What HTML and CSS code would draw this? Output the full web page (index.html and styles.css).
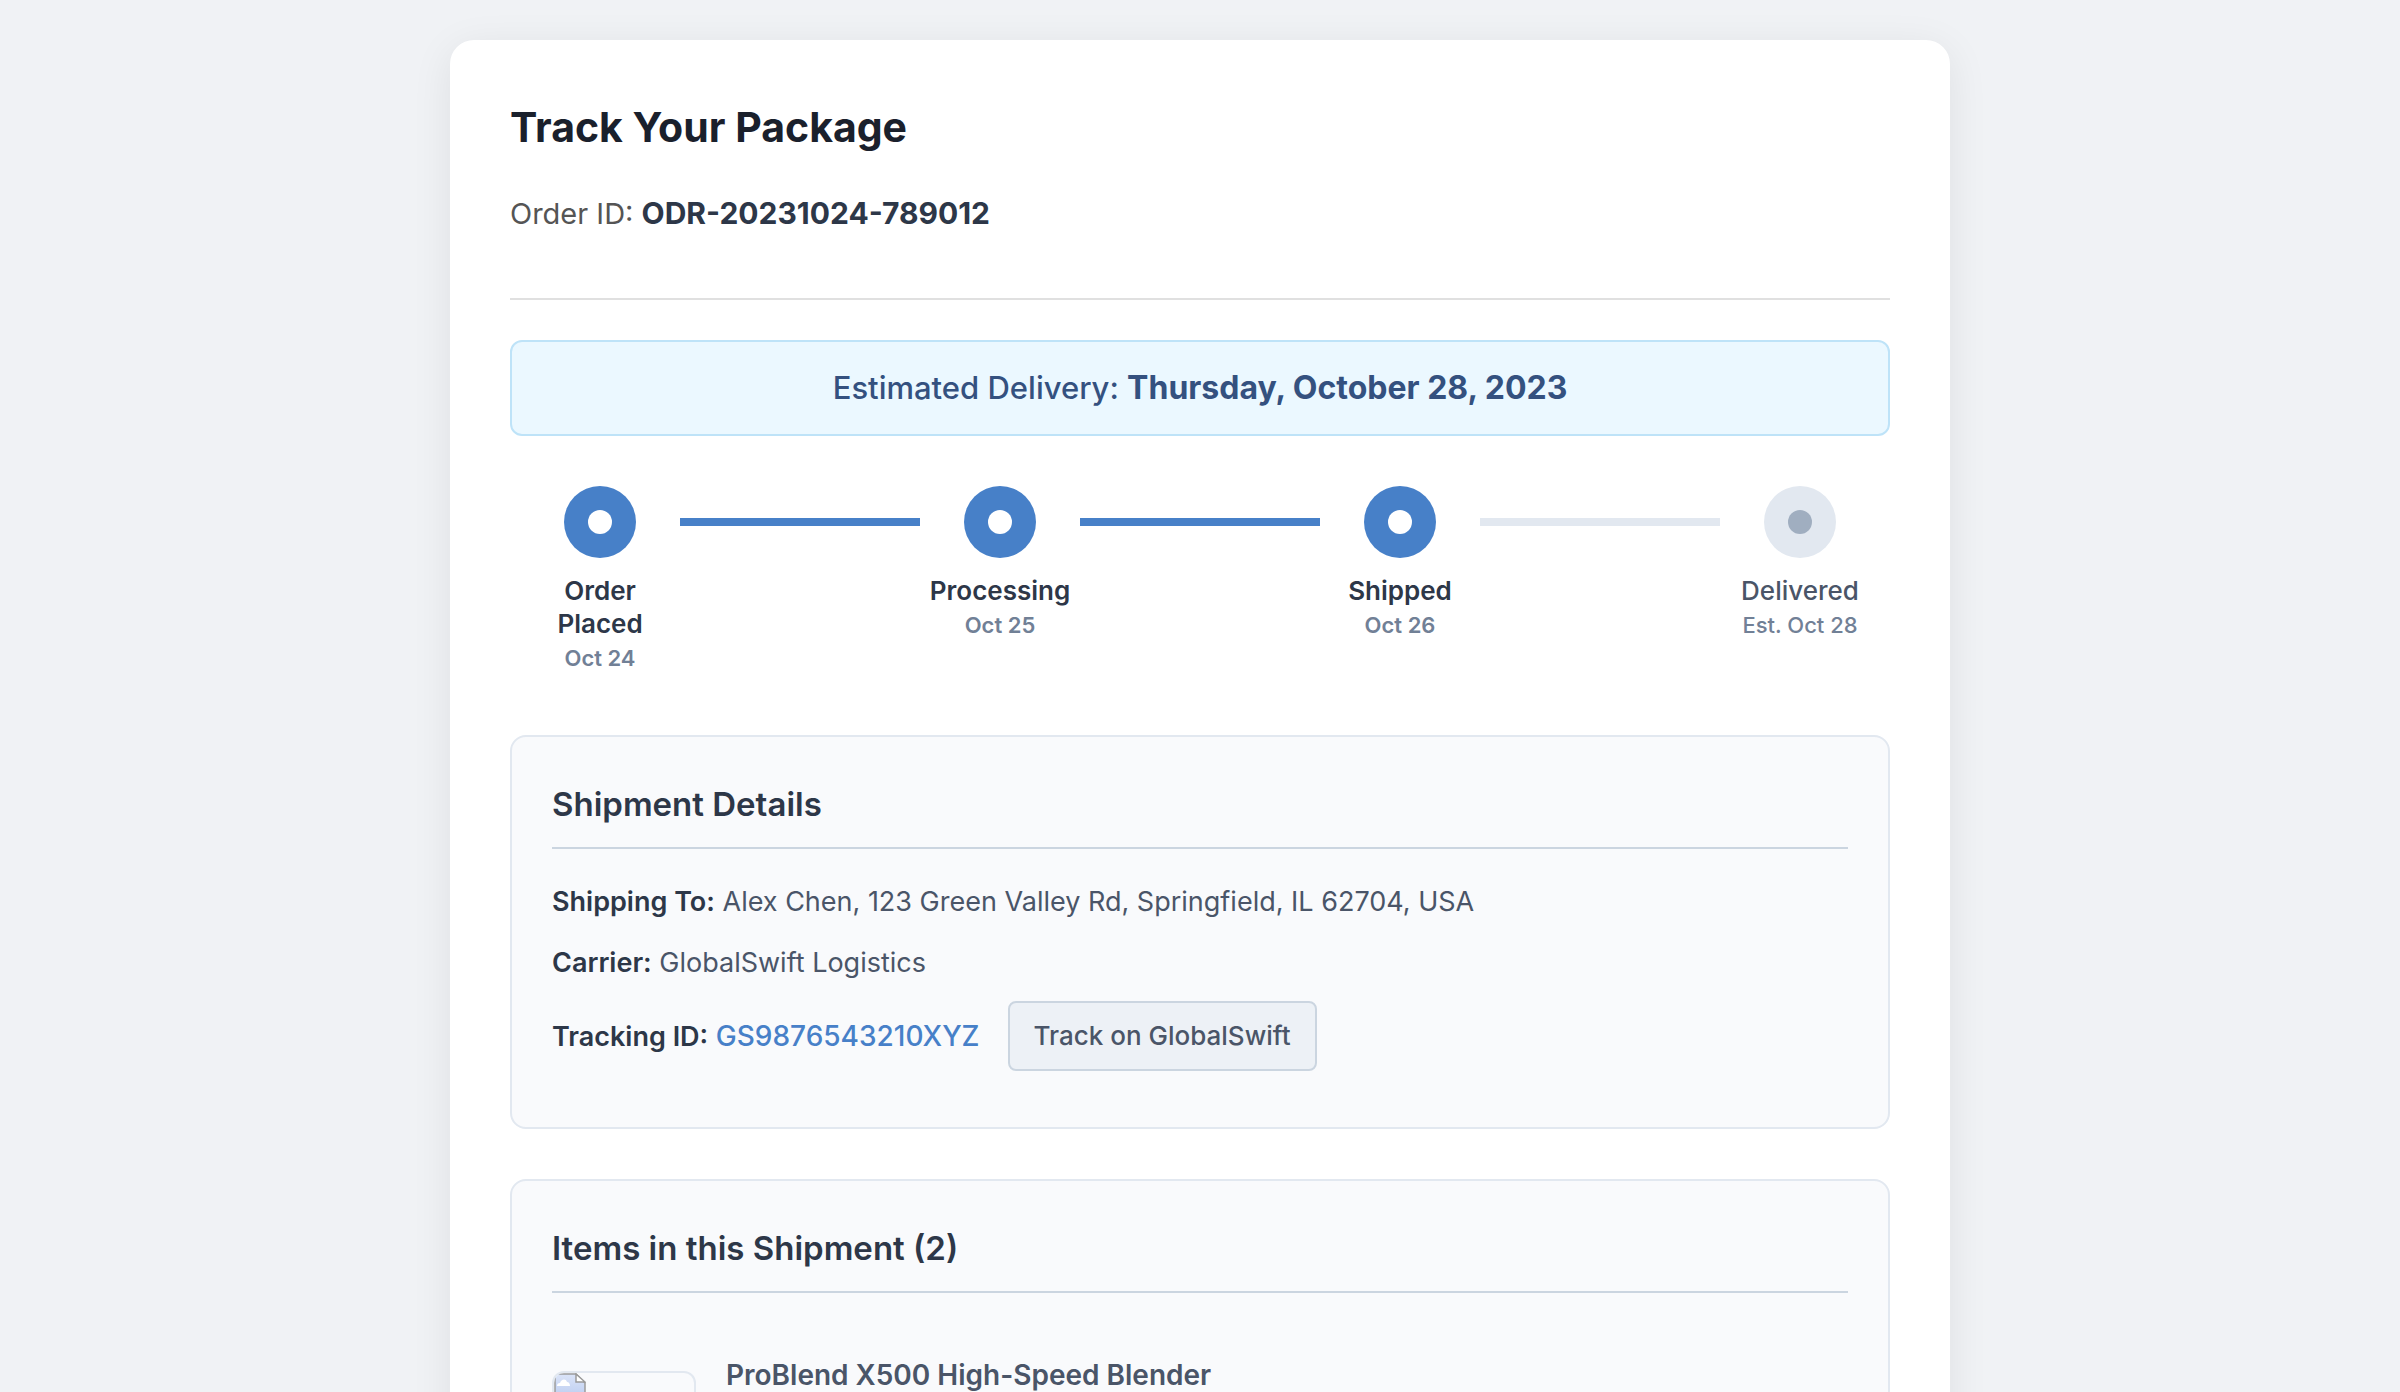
FILE: index.html
```html
<!DOCTYPE html>
<html lang="en">
<head>
<meta charset="utf-8">
<meta name="viewport" content="width=device-width, initial-scale=1">
<title>Track Your Package</title>
<link rel="stylesheet" href="styles.css">
</head>
<body>
<main class="card">
  <header class="card-header">
    <h1 class="title">Track Your Package</h1>
    <p class="order-id">Order ID: <strong>ODR-20231024-789012</strong></p>
  </header>

  <p class="estimate">Estimated Delivery: <strong>Thursday, October 28, 2023</strong></p>

  <ol class="steps">
    <li class="step done">
      <span class="dot"></span>
      <span class="step-label">Order Placed</span>
      <span class="step-date">Oct 24</span>
    </li>
    <li class="line done" aria-hidden="true"></li>
    <li class="step done">
      <span class="dot"></span>
      <span class="step-label">Processing</span>
      <span class="step-date">Oct 25</span>
    </li>
    <li class="line done" aria-hidden="true"></li>
    <li class="step done">
      <span class="dot"></span>
      <span class="step-label">Shipped</span>
      <span class="step-date">Oct 26</span>
    </li>
    <li class="line" aria-hidden="true"></li>
    <li class="step">
      <span class="dot"></span>
      <span class="step-label">Delivered</span>
      <span class="step-date">Est. Oct 28</span>
    </li>
  </ol>

  <section class="panel">
    <h2 class="panel-title">Shipment Details</h2>
    <p class="detail"><strong>Shipping To:</strong> Alex Chen, 123 Green Valley Rd, Springfield, IL 62704, USA</p>
    <p class="detail"><strong>Carrier:</strong> GlobalSwift Logistics</p>
    <div class="detail tracking">
      <span><strong>Tracking ID:</strong> <a class="tracking-link" href="#">GS9876543210XYZ</a></span>
      <button class="track-button" type="button">Track on GlobalSwift</button>
    </div>
  </section>

  <section class="panel">
    <h2 class="panel-title">Items in this Shipment (2)</h2>
    <article class="item">
      <div class="thumb">
        <svg width="32" height="32" viewBox="0 0 32 32" aria-hidden="true">
          <defs>
            <linearGradient id="sky" x1="0" y1="0" x2="0" y2="1">
              <stop offset="0" stop-color="#dbe4f8"/>
              <stop offset="1" stop-color="#b4c7ee"/>
            </linearGradient>
          </defs>
          <path d="M1 1H22L31 10V31H1Z" fill="url(#sky)" stroke="#9b9b9b" stroke-width="1.5"/>
          <path d="M22 1V9H31Z" fill="#fff" stroke="#9b9b9b" stroke-width="1.5"/>
          <path d="M3 13C3 11 4 10 6 10C7 6 12 5 13 9C15 9 16 11 16 13Z" fill="#fff"/>
        </svg>
      </div>
      <h3 class="item-name">ProBlend X500 High-Speed Blender</h3>
    </article>
  </section>
</main>
</body>
</html>
```
FILE: styles.css
```css
* {
  box-sizing: border-box;
}

body {
  height: 100vh;
  margin: 0;
  padding: 40px;
  overflow: hidden;
  background: #f0f2f5;
  color: #4a5568;
  font-family: Inter, "Liberation Sans", sans-serif;
}

h1, h2, h3, p, ol {
  margin: 0;
  padding: 0;
}

.card {
  max-width: 1500px;
  margin: 0 auto;
  padding: 60px;
  border-radius: 24px;
  background: #fff;
  box-shadow: 0 8px 40px rgba(0, 0, 0, 0.08);
}

.card-header {
  padding-bottom: 60px;
  border-bottom: 2px solid #e0e0e0;
  margin-bottom: 40px;
}

.title {
  margin-bottom: 36px;
  color: #1a202c;
  font-size: 41px;
  font-weight: 700;
  line-height: 54px;
}

.order-id {
  color: #555;
  font-size: 29px;
  line-height: 48px;
}

.order-id strong {
  color: #2d3748;
  font-size: 30px;
  font-weight: 700;
  line-height: 1;
}

.estimate {
  padding: 22px;
  border: 2px solid #bee3f8;
  border-radius: 12px;
  margin-bottom: 50px;
  background: #ebf8ff;
  color: #34517f;
  font-size: 31px;
  font-weight: 500;
  line-height: 48px;
  text-align: center;
}

.estimate strong {
  font-size: 32px;
  font-weight: 700;
  line-height: 1;
}

.steps {
  display: flex;
  align-items: flex-start;
  padding: 0 10px;
  margin-bottom: 60px;
  list-style: none;
}

.step {
  display: flex;
  flex: 0 0 160px;
  flex-direction: column;
  align-items: center;
  padding: 0 8px;
  text-align: center;
}

.line {
  flex: 1;
  height: 8px;
  margin-top: 32px;
  background: #e2e8f0;
}

.line.done {
  background: #4780c8;
}

.dot {
  display: grid;
  width: 72px;
  height: 72px;
  place-items: center;
  border-radius: 50%;
  margin-bottom: 16px;
  background: #e2e8f0;
}

.dot::after {
  width: 24px;
  height: 24px;
  border-radius: 50%;
  background: #a0aec0;
  content: "";
}

.done .dot {
  background: #4780c8;
}

.done .dot::after {
  background: #fff;
}

.step-label {
  font-size: 26px;
  font-weight: 500;
  line-height: 33px;
}

.done .step-label {
  color: #2d3748;
  font-weight: 600;
}

.step-date {
  margin-top: 2px;
  color: #718096;
  font-size: 22px;
  font-weight: 500;
  line-height: 33px;
}

.done .step-date {
  font-weight: 600;
}

.panel {
  padding: 40px;
  border: 2px solid #e2e8f0;
  border-radius: 16px;
  margin-bottom: 50px;
  background: #f9fafc;
}

.panel-title {
  padding-bottom: 16px;
  border-bottom: 2px solid #cbd5e0;
  margin-bottom: 30px;
  color: #2d3748;
  font-size: 33px;
  font-weight: 600;
  line-height: 54px;
}

.detail {
  margin-bottom: 16px;
  font-size: 27px;
  line-height: 45px;
}

.detail strong {
  color: #2d3748;
  font-weight: 600;
}

.tracking {
  display: flex;
  align-items: center;
  gap: 28px;
}

.tracking-link {
  color: #4780c8;
  font-size: 28px;
  font-weight: 500;
  line-height: 1;
  text-decoration: none;
}

.track-button {
  padding: 16px 24px;
  border: 2px solid #cbd5e0;
  border-radius: 8px;
  background: #edf1f6;
  color: #4a5568;
  font: 500 26px/34px Inter, "Liberation Sans", sans-serif;
}

.item {
  display: flex;
  align-items: flex-start;
  gap: 30px;
  padding: 32px 0;
}

.thumb {
  width: 144px;
  height: 144px;
  border: 2px solid #e2e8f0;
  border-radius: 12px;
  margin-top: 16px;
  overflow: hidden;
}

.item-name {
  font-size: 28px;
  font-weight: 600;
  line-height: 40px;
}
```
